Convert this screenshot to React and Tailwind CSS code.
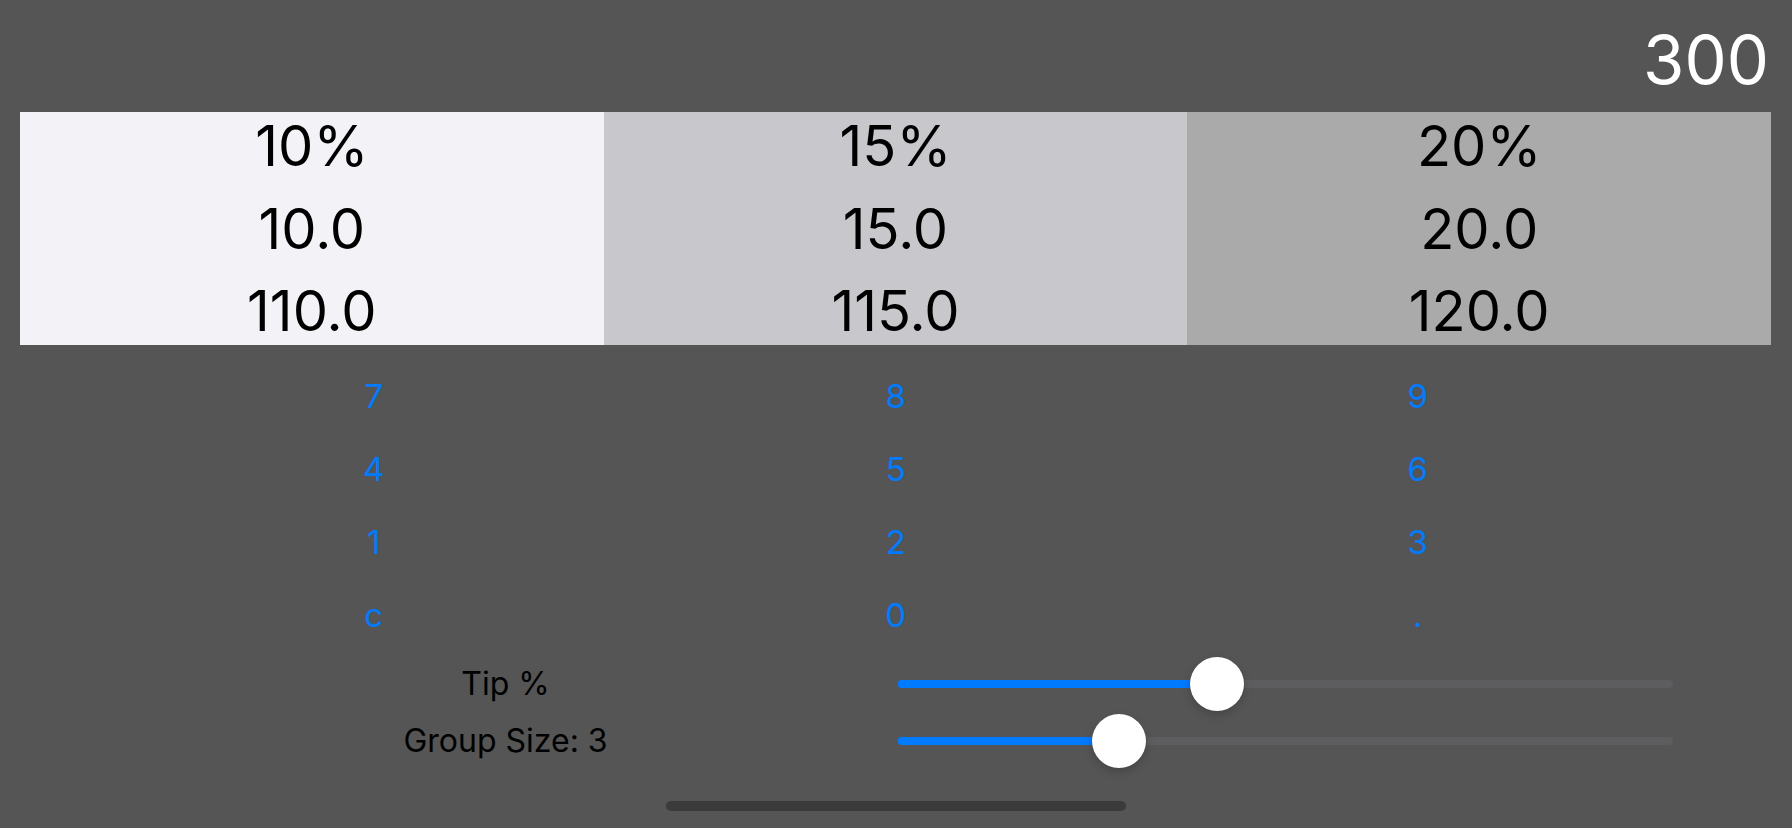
import React from "react";

const font = { fontFamily: "Inter, 'Liberation Sans', sans-serif" };

function Slider({ pos }) {
  return (
    <div className="relative w-[775px] h-[57px] flex items-center">
      <div className="relative w-full h-[8px] rounded-full bg-[#5d5d60]">
        <div className="absolute left-0 top-0 h-full rounded-full bg-[#007aff]" style={{ width: pos }} />
      </div>
      <div
        className="absolute top-1/2 -translate-y-1/2 -translate-x-1/2 w-[54px] h-[54px] rounded-full bg-white shadow-[0_4px_10px_rgba(0,0,0,0.18),0_0_1px_rgba(0,0,0,0.1)]"
        style={{ left: pos }}
      />
    </div>
  );
}

export default function App() {
  const cells = [
    { bg: "bg-[#f2f2f7]", rows: ["10%", "10.0", "110.0"] },
    { bg: "bg-[#c7c7cc]", rows: ["15%", "15.0", "115.0"] },
    { bg: "bg-[#aaaaaa]", rows: ["20%", "20.0", "120.0"] },
  ];
  const keys = ["7", "8", "9", "4", "5", "6", "1", "2", "3", "c", "0", "."];
  return (
    <div className="w-[1792px] h-[828px] bg-[#555555] flex flex-col overflow-hidden" style={font}>
      <div className="h-[112px] flex justify-end items-start pt-[26px] pr-[23px]">
        <span className="text-[67px] leading-none text-white">300</span>
      </div>
      <div className="mx-[20px] h-[233px] flex w-[1751px]">
        {cells.map((c, i) => (
          <div key={i} className={`flex-1 ${c.bg} flex flex-col items-center justify-between py-[6px]`}>
            {c.rows.map((r) => (
              <span key={r} className="text-[56px] leading-none text-black">{r}</span>
            ))}
          </div>
        ))}
      </div>
      <div className="mt-[15px] px-[113px] grid grid-cols-3">
        {keys.map((k) => (
          <div key={k} className="h-[73px] flex items-center justify-center">
            <span className="text-[33px] leading-none text-[#007aff]">{k}</span>
          </div>
        ))}
      </div>
      <div className="mt-[3px] px-[113px] flex flex-col">
        <div className="flex items-center h-[57px]">
          <div className="w-[785px] text-center text-[32px] leading-none text-black">Tip %</div>
          <Slider pos={319} />
        </div>
        <div className="flex items-center h-[57px]">
          <div className="w-[785px] text-center text-[32px] leading-none text-black">Group Size: 3</div>
          <Slider pos={221} />
        </div>
      </div>
      <div className="mt-[32px] flex justify-center">
        <div className="w-[460px] h-[10px] rounded-full bg-[#3b3b3b]" />
      </div>
    </div>
  );
}
